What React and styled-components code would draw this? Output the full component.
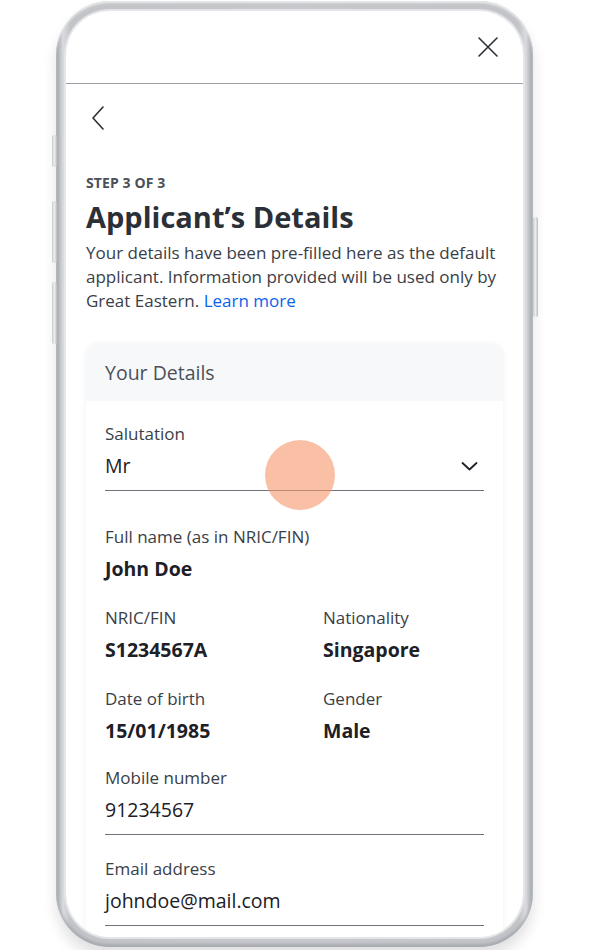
import React from "react";
import styled, { createGlobalStyle } from "styled-components";

const GlobalStyle = createGlobalStyle`
  * { box-sizing: border-box; }
  html, body { margin: 0; padding: 0; background: #fff; }
  body { font-family: "Open Sans", "Noto Sans", Arial, sans-serif; }
`;

const Stage = styled.div`
  width: 600px;
  height: 950px;
  overflow: hidden;
  padding: 1px 0 0 56px;
`;

const Phone = styled.div`
  position: relative;
  width: 477px;
  height: 946px;
  padding: 10px;
  border-radius: 54px;
  background: linear-gradient(
    90deg,
    #9ea1a7 0%,
    #d9dbde 1.5%,
    #c2c4c8 3%,
    #c6c8cc 50%,
    #c2c4c8 97%,
    #d9dbde 98.5%,
    #9ea1a7 100%
  );
  box-shadow: 0 10px 14px rgba(0, 0, 0, 0.12), inset 0 2px 2px #e9eaec,
    inset 0 -3px 3px #a7aaaf;
`;

const SideButton = styled.div`
  position: absolute;
  width: 5px;
  border-radius: 2px;
  background: linear-gradient(90deg, #c9cbcf, #eceded, #b9bcc0);
  top: ${(p) => p.$top}px;
  height: ${(p) => p.$h}px;
  ${(p) => (p.$right ? "right: -5px;" : "left: -4px;")}
`;

const Screen = styled.div`
  position: relative;
  height: 100%;
  background: #fff;
  border-radius: 44px;
  overflow: hidden;
  box-shadow: 0 0 0 2px #e4e5e8;
`;

const TopBar = styled.div`
  height: 73px;
  display: flex;
  align-items: center;
  justify-content: flex-end;
  padding: 0 24px 0 0;
  border-bottom: 1px solid #9ca1a8;
`;

const IconButton = styled.button`
  border: 0;
  background: none;
  padding: 0;
  display: flex;
  color: #2b2f36;
`;

const Content = styled.div`
  padding: 22px 20px 0 20px;
`;

const BackRow = styled.div`
  display: flex;
  height: 24px;
  margin-left: 5px;
`;

const Step = styled.div`
  margin-top: 44px;
  font-size: 14px;
  line-height: 18px;
  font-weight: 700;
  letter-spacing: 0.1px;
  color: #4b5058;
`;

const Title = styled.h1`
  margin: 7px 0 0;
  font-size: 29px;
  line-height: 36px;
  font-weight: 700;
  color: #2b2f36;
`;

const Intro = styled.p`
  margin: 6px 0 0;
  font-size: 17px;
  line-height: 24px;
  color: #3a3e46;
`;

const Link = styled.a`
  color: #0a62f0;
  text-decoration: none;
`;

const Card = styled.section`
  margin-top: 30px;
  border-radius: 12px;
  background: #fff;
  box-shadow: 0 1px 6px rgba(20, 30, 50, 0.06);
  overflow: hidden;
`;

const CardHeader = styled.div`
  height: 58px;
  display: flex;
  align-items: center;
  padding: 0 19px;
  background: #f7f8fa;
  font-size: 19.5px;
  color: #4b5058;
`;

const CardBody = styled.div`
  padding: 22px 19px 40px;
`;

const Field = styled.div`
  margin-top: ${(p) => p.$mt || 0}px;
  ${(p) => (p.$underline ? "border-bottom: 1px solid #6e727a; padding-bottom: 11px;" : "")}
`;

const Label = styled.div`
  font-size: 17px;
  line-height: 22px;
  color: #3a3e46;
`;

const ValueRow = styled.div`
  margin-top: 8px;
  display: flex;
  align-items: center;
  justify-content: space-between;
`;

const Value = styled.div`
  font-size: 19.5px;
  line-height: 26px;
  font-weight: ${(p) => (p.$bold ? 700 : 500)};
  color: #1d2026;
`;

const Pair = styled.div`
  margin-top: ${(p) => p.$mt}px;
  display: grid;
  grid-template-columns: 218px 1fr;
`;

const Chevron = styled.span`
  display: flex;
  margin-right: 6px;
`;

const Touch = styled.div`
  position: absolute;
  left: 199px;
  top: 429px;
  width: 70px;
  height: 70px;
  border-radius: 50%;
  background: rgba(245, 150, 107, 0.6);
`;

const CloseIcon = () => (
  <svg width="22" height="22" viewBox="0 0 22 22" fill="none" stroke="currentColor" strokeWidth="1.6" strokeLinecap="round">
    <path d="M2 2 L20 20 M20 2 L2 20" />
  </svg>
);

const BackIcon = () => (
  <svg width="14" height="24" viewBox="0 0 14 24" fill="none" stroke="currentColor" strokeWidth="1.6" strokeLinecap="round" strokeLinejoin="round">
    <path d="M12 1 L2 12 L12 23" />
  </svg>
);

const ChevronDown = () => (
  <svg width="17" height="10" viewBox="0 0 17 10" fill="none" stroke="#1d2026" strokeWidth="1.8" strokeLinecap="round" strokeLinejoin="round">
    <path d="M1.5 2 L8.5 8.5 L15.5 2" />
  </svg>
);

export default function App() {
  return (
    <Stage>
      <GlobalStyle />
      <Phone>
        <SideButton $top={134} $h={32} />
        <SideButton $top={200} $h={62} />
        <SideButton $top={281} $h={62} />
        <SideButton $right $top={216} $h={100} />
        <Screen>
          <TopBar>
            <IconButton aria-label="Close">
              <CloseIcon />
            </IconButton>
          </TopBar>
          <Content>
            <BackRow>
              <IconButton aria-label="Back">
                <BackIcon />
              </IconButton>
            </BackRow>
            <Step>STEP 3 OF 3</Step>
            <Title>Applicant’s Details</Title>
            <Intro>
              Your details have been pre-filled here as the default applicant. Information provided will be used only by Great Eastern. <Link href="#">Learn more</Link>
            </Intro>
            <Card>
              <CardHeader>Your Details</CardHeader>
              <CardBody>
                <Field $underline>
                  <Label>Salutation</Label>
                  <ValueRow>
                    <Value>Mr</Value>
                    <Chevron>
                      <ChevronDown />
                    </Chevron>
                  </ValueRow>
                </Field>
                <Field $mt={35}>
                  <Label>Full name (as in NRIC/FIN)</Label>
                  <ValueRow>
                    <Value $bold>John Doe</Value>
                  </ValueRow>
                </Field>
                <Pair $mt={25}>
                  <Field>
                    <Label>NRIC/FIN</Label>
                    <ValueRow>
                      <Value $bold>S1234567A</Value>
                    </ValueRow>
                  </Field>
                  <Field>
                    <Label>Nationality</Label>
                    <ValueRow>
                      <Value $bold>Singapore</Value>
                    </ValueRow>
                  </Field>
                </Pair>
                <Pair $mt={25}>
                  <Field>
                    <Label>Date of birth</Label>
                    <ValueRow>
                      <Value $bold>15/01/1985</Value>
                    </ValueRow>
                  </Field>
                  <Field>
                    <Label>Gender</Label>
                    <ValueRow>
                      <Value $bold>Male</Value>
                    </ValueRow>
                  </Field>
                </Pair>
                <Field $mt={23} $underline>
                  <Label>Mobile number</Label>
                  <ValueRow>
                    <Value>91234567</Value>
                  </ValueRow>
                </Field>
                <Field $mt={23} $underline>
                  <Label>Email address</Label>
                  <ValueRow>
                    <Value>johndoe@mail.com</Value>
                  </ValueRow>
                </Field>
              </CardBody>
            </Card>
          </Content>
          <Touch />
        </Screen>
      </Phone>
    </Stage>
  );
}
